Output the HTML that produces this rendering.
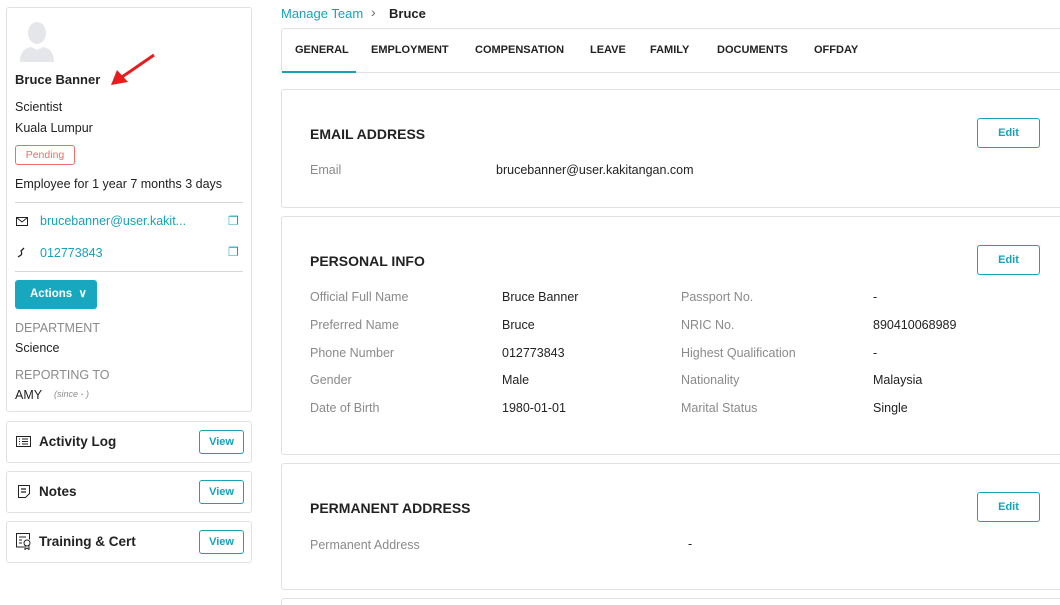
<!DOCTYPE html>
<html><head><meta charset="utf-8"><style>
*{box-sizing:border-box;margin:0;padding:0}
html,body{width:1060px;height:605px;overflow:hidden}
body{background:#fff;font-family:"Liberation Sans",sans-serif;font-size:12.5px;color:#222;position:relative}
.abs{position:absolute}
.card{position:absolute;border:1px solid #dfe1e5;border-radius:3px;background:#fff}
.teal{color:#17a2b8}
.lbl{color:#8a8a8a}
.btn{position:absolute;border:1px solid #17a2b8;border-radius:3px;color:#17a2b8;font-size:11px;text-align:center;font-weight:bold}
.sec{position:absolute;left:28px;font-weight:bold;font-size:14px;color:#222}
.tab{position:absolute;top:15px;font-size:11px;font-weight:bold;color:#222}
</style></head><body>
<div class="card" style="left:6px;top:7px;width:246px;height:405px">
 <svg class="abs" style="left:12px;top:12px" width="36" height="42" viewBox="0 0 36 42"><ellipse cx="18" cy="13" rx="9" ry="11" fill="#e4e6ea"/><path d="M1 42c0-10 5-14 11-15l6 3 6-3c6 1 11 5 11 15z" fill="#e4e6ea"/></svg>
 <svg class="abs" style="left:100px;top:44px" width="50" height="36" viewBox="0 0 50 36"><line x1="47" y1="3" x2="12" y2="27" stroke="#e81c1c" stroke-width="3"/><path d="M4 33l6-15 11 12z" fill="#e81c1c"/></svg>
 <div class="abs" style="left:8px;top:64px;font-weight:bold;font-size:13px">Bruce Banner</div>
 <div class="abs" style="left:8px;top:92px">Scientist</div>
 <div class="abs" style="left:8px;top:113px">Kuala Lumpur</div>
 <div class="abs" style="left:8px;top:137px;width:60px;height:20px;border:1px solid #f26b6b;border-radius:3px;color:#f26b6b;font-size:10.5px;text-align:center;line-height:18px">Pending</div>
 <div class="abs" style="left:8px;top:169px">Employee for 1 year 7 months 3 days</div>
 <div class="abs" style="left:8px;top:194px;width:228px;border-top:1px solid #d5d7db"></div>
 <svg class="abs" style="left:9px;top:209px" width="12" height="9" viewBox="0 0 12 9"><rect x=".5" y=".5" width="11" height="8" fill="none" stroke="#222"/><path d="M.5 .5l5.5 4.5 5.5-4.5" fill="none" stroke="#222"/></svg>
 <div class="abs teal" style="left:33px;top:206px">brucebanner@user.kakit...</div>
 <div class="abs teal" style="left:221px;top:206px;font-size:12px">&#x2750;</div>
 <svg class="abs" style="left:10px;top:239px" width="9" height="11" viewBox="0 0 9 11"><path d="M7 1L4 4c1 2 1 3 0 4L1 10" fill="none" stroke="#222" stroke-width="1.3"/></svg>
 <div class="abs teal" style="left:33px;top:238px">012773843</div>
 <div class="abs teal" style="left:221px;top:237px;font-size:12px">&#x2750;</div>
 <div class="abs" style="left:8px;top:263px;width:228px;border-top:1px solid #d5d7db"></div>
 <div class="abs" style="left:8px;top:272px;width:82px;height:29px;background:#17a8c0;border-radius:3px;color:#fff;font-weight:bold;font-size:11.5px;line-height:29px;padding-left:15px">Actions &nbsp;&#x2228;</div>
 <div class="abs lbl" style="left:8px;top:313px">DEPARTMENT</div>
 <div class="abs" style="left:8px;top:333px">Science</div>
 <div class="abs lbl" style="left:8px;top:360px">REPORTING TO</div>
 <div class="abs" style="left:8px;top:380px">AMY</div>
 <div class="abs lbl" style="left:47px;top:381px;font-size:9px;font-style:italic">(since - )</div>
</div>
<div class="card" style="left:6px;top:421px;width:246px;height:42px">
 <svg class="abs" style="left:9px;top:14px" width="15" height="11" viewBox="0 0 15 11"><rect x=".5" y=".5" width="14" height="10" fill="none" stroke="#222"/><path d="M3 3h1M6 3h6M3 5.5h1M6 5.5h6M3 8h1M6 8h6" stroke="#222"/></svg>
 <div class="abs" style="left:32px;top:12px;font-weight:bold;font-size:13.5px">Activity Log</div>
 <div class="btn" style="left:192px;top:8px;width:45px;height:24px;line-height:22px">View</div>
</div>
<div class="card" style="left:6px;top:471px;width:246px;height:42px">
 <svg class="abs" style="left:11px;top:13px" width="12" height="13" viewBox="0 0 12 13"><path d="M.5 .5h11v8l-4 4h-7z" fill="none" stroke="#222"/><path d="M3 4h5M3 7h5" stroke="#444" stroke-width="1.5"/></svg>
 <div class="abs" style="left:32px;top:12px;font-weight:bold;font-size:13.5px">Notes</div>
 <div class="btn" style="left:192px;top:8px;width:45px;height:24px;line-height:22px">View</div>
</div>
<div class="card" style="left:6px;top:521px;width:246px;height:42px">
 <svg class="abs" style="left:9px;top:11px" width="16" height="17" viewBox="0 0 16 17"><path d="M8 14H.5V.5h13v6" fill="none" stroke="#222"/><path d="M3 4h7M3 7h3M3 10h3" stroke="#222"/><circle cx="11" cy="10" r="3" fill="none" stroke="#222"/><path d="M9 12.5v4l2-1.5 2 1.5v-4" fill="none" stroke="#222"/></svg>
 <div class="abs" style="left:32px;top:12px;font-weight:bold;font-size:13.5px">Training &amp; Cert</div>
 <div class="btn" style="left:192px;top:8px;width:45px;height:24px;line-height:22px">View</div>
</div>
<div class="abs teal" style="left:281px;top:6px;font-size:13px">Manage Team</div>
<div class="abs" style="left:371px;top:4px;color:#666;font-size:14px">&#x203A;</div>
<div class="abs" style="left:389px;top:6px;font-weight:bold;font-size:13px">Bruce</div>
<div class="card" style="left:281px;top:28px;width:800px;height:45px">
 <div class="tab teal" style="left:13px">GENERAL</div>
 <div class="tab" style="left:89px">EMPLOYMENT</div>
 <div class="tab" style="left:193px">COMPENSATION</div>
 <div class="tab" style="left:308px">LEAVE</div>
 <div class="tab" style="left:368px">FAMILY</div>
 <div class="tab" style="left:435px">DOCUMENTS</div>
 <div class="tab" style="left:532px">OFFDAY</div>
 <div class="abs" style="left:0;top:42px;width:74px;height:2px;background:#17a2b8"></div>
</div>
<div class="card" style="left:281px;top:89px;width:800px;height:119px">
 <div class="sec" style="top:36px">EMAIL ADDRESS</div>
 <div class="btn" style="left:695px;top:28px;width:63px;height:30px;line-height:28px">Edit</div>
 <div class="abs lbl" style="left:28px;top:73px">Email</div>
 <div class="abs" style="left:214px;top:73px">brucebanner@user.kakitangan.com</div>
</div>
<div class="card" style="left:281px;top:216px;width:800px;height:239px">
 <div class="sec" style="top:36px">PERSONAL INFO</div>
 <div class="btn" style="left:695px;top:28px;width:63px;height:30px;line-height:28px">Edit</div>
 <div class="abs lbl" style="left:28px;top:67px;line-height:27.8px">Official Full Name<br>Preferred Name<br>Phone Number<br>Gender<br>Date of Birth</div>
 <div class="abs" style="left:220px;top:67px;line-height:27.8px">Bruce Banner<br>Bruce<br>012773843<br>Male<br>1980-01-01</div>
 <div class="abs lbl" style="left:399px;top:67px;line-height:27.8px">Passport No.<br>NRIC No.<br>Highest Qualification<br>Nationality<br>Marital Status</div>
 <div class="abs" style="left:591px;top:67px;line-height:27.8px">-<br>890410068989<br>-<br>Malaysia<br>Single</div>
</div>
<div class="card" style="left:281px;top:463px;width:800px;height:127px">
 <div class="sec" style="top:36px">PERMANENT ADDRESS</div>
 <div class="btn" style="left:695px;top:28px;width:63px;height:30px;line-height:28px">Edit</div>
 <div class="abs lbl" style="left:28px;top:74px">Permanent Address</div>
 <div class="abs" style="left:406px;top:73px">-</div>
</div>
<div class="card" style="left:281px;top:598px;width:800px;height:30px"></div>
</body></html>
